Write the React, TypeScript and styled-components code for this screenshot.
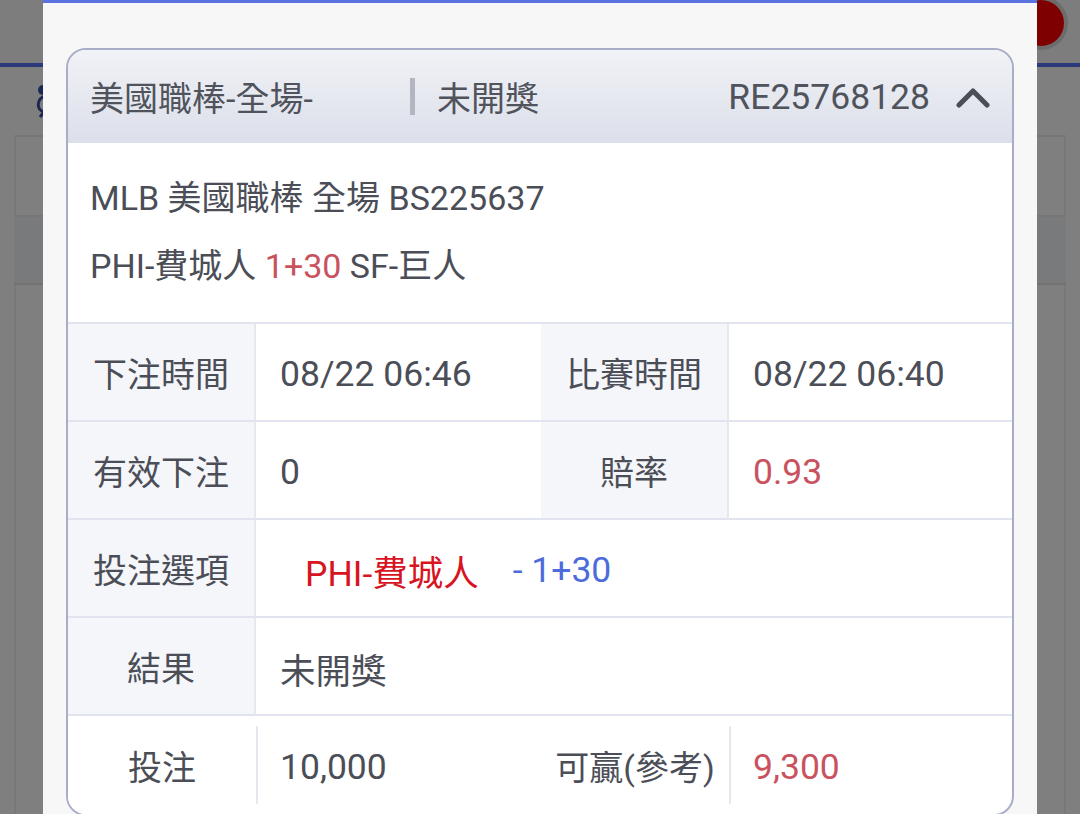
import React from "react";
import styled, { createGlobalStyle } from "styled-components";

const Global = createGlobalStyle`
  html, body { margin: 0; padding: 0; }
  body {
    width: 1080px; height: 814px; overflow: hidden;
    font-family: Roboto, "Noto Sans CJK TC", "Noto Sans", sans-serif;
    background: #ffffff;
  }
`;

const Page = styled.div`
  position: relative;
  width: 1080px;
  height: 814px;
  overflow: hidden;
  background: #ffffff;
`;

const TopBar = styled.div`
  height: 63px;
  border-bottom: 4px solid #5774f2;
  background: #fafafa;
  display: flex;
  justify-content: flex-end;
  align-items: flex-start;
  padding-right: 12px;
`;

const RedDot = styled.div`
  width: 46px;
  height: 46px;
  margin-top: -4px;
  border-radius: 50%;
  background: #ff0000;
  border: 4px solid #d8d8d8;
`;

const SubBar = styled.div`
  height: 68px;
  display: flex;
  align-items: center;
  padding-left: 34px;
`;

const BgBox = styled.div`
  margin: 0 14px;
  height: 78px;
  border: 2px solid #eeeeee;
  display: flex;
  align-items: center;
  padding-left: 26px;
  font-size: 30px;
  color: #222;
`;

const BgBand = styled.div`
  margin: 0 14px;
  height: 66px;
  background: #f2f4f8;
  border-bottom: 2px solid #e4e4e4;
`;

const BgList = styled.div`
  margin: 0 14px;
  height: 540px;
  border-left: 2px solid #f0f0f0;
  border-right: 2px solid #f0f0f0;
`;

const Overlay = styled.div`
  position: absolute;
  inset: 0;
  background: rgba(0, 0, 0, 0.5);
`;

const Modal = styled.div`
  position: absolute;
  left: 43px;
  top: 0;
  width: 994px;
  height: 900px;
  background: #f7f7f7;
  border-top: 3px solid #5b73e0;
  padding: 45px 23px 0;
  box-sizing: border-box;
`;

const Card = styled.div`
  border: 2px solid #a9adc8;
  border-radius: 20px;
  overflow: hidden;
  background: #ffffff;
  color: #4b4e57;
`;

const Header = styled.div`
  height: 93px;
  background: linear-gradient(#f1f2f6, #dcdfea);
  display: flex;
  align-items: center;
  padding: 0 22px 0 22px;
  font-size: 34px;
  color: #50535c;
`;

const HeaderTitle = styled.span`
  width: 320px;
`;

const Sep = styled.span`
  width: 5px;
  height: 37px;
  background: #b3b6c0;
  margin-right: 22px;
`;

const HeaderStatus = styled.span`
  flex: 1;
`;

const HeaderCode = styled.span`
  margin-right: 26px;
  font-size: 35.5px;
`;

const Info = styled.div`
  padding: 21px 22px 22px;
  font-size: 34px;
  line-height: 68px;
  border-bottom: 2px solid #e1e4ee;
`;

const Red = styled.span<{ $strong?: boolean }>`
  color: ${(p) => (p.$strong ? "#d7141f" : "#c9525f")};
`;

const Blue = styled.span`
  color: #4d6cdb;
`;

const Table = styled.div`
  display: grid;
  grid-template-columns: 188px 285px 188px 1fr;
  font-size: 34px;
`;

const Label = styled.div<{ $plain?: boolean; $last?: boolean }>`
  position: relative;
  box-sizing: border-box;
  height: 98px;
  display: flex;
  align-items: center;
  justify-content: center;
  background: ${(p) => (p.$plain ? "#ffffff" : "#f5f6fa")};
  border-bottom: ${(p) => (p.$last ? "none" : "2px solid #e1e4ee")};
  border-right: ${(p) => (p.$plain ? "none" : "2px solid #e6e8f0")};
`;

const Value = styled.div<{ $span?: boolean; $last?: boolean; $indent?: boolean }>`
  box-sizing: border-box;
  height: 98px;
  display: flex;
  align-items: center;
  padding-top: 4px;
  padding-left: ${(p) => (p.$indent ? "49px" : "24px")};
  grid-column: ${(p) => (p.$span ? "2 / 5" : "auto")};
  border-bottom: ${(p) => (p.$last ? "none" : "2px solid #e1e4ee")};
  font-size: 35.5px;
  gap: 34px;
`;

const ShortDivider = styled.span`
  position: absolute;
  right: -2px;
  top: 10px;
  bottom: 10px;
  width: 2px;
  background: #e6e8f0;
`;

const Chevron = () => (
  <svg width="34" height="24" viewBox="0 0 34 24" fill="none">
    <path d="M3 20 L17 6 L31 20" stroke="#4b4e57" strokeWidth="5" strokeLinecap="round" strokeLinejoin="round" />
  </svg>
);

const BgIcon = () => (
  <svg width="16" height="34" viewBox="0 0 16 34" fill="none">
    <circle cx="9" cy="6" r="5" fill="#3b4fa8" />
    <path d="M12 12 C2 14 2 26 10 28 M10 28 L6 33" stroke="#3b4fa8" strokeWidth="3" fill="none" />
  </svg>
);

export default function App() {
  return (
    <>
      <Global />
      <Page>
        <TopBar>
          <RedDot />
        </TopBar>
        <SubBar>
          <BgIcon />
        </SubBar>
        <BgBox>I</BgBox>
        <BgBand />
        <BgList />
        <Overlay />
        <Modal>
          <Card>
            <Header>
              <HeaderTitle>美國職棒-全場-</HeaderTitle>
              <Sep />
              <HeaderStatus>未開獎</HeaderStatus>
              <HeaderCode>RE25768128</HeaderCode>
              <Chevron />
            </Header>
            <Info>
              <div>MLB 美國職棒 全場 BS225637</div>
              <div>
                PHI-費城人 <Red>1+30</Red> SF-巨人
              </div>
            </Info>
            <Table>
              <Label>下注時間</Label>
              <Value>08/22 06:46</Value>
              <Label>比賽時間</Label>
              <Value>08/22 06:40</Value>

              <Label>有效下注</Label>
              <Value>0</Value>
              <Label>賠率</Label>
              <Value>
                <Red>0.93</Red>
              </Value>

              <Label>投注選項</Label>
              <Value $span $indent>
                <Red $strong>PHI-費城人</Red>
                <Blue>- 1+30</Blue>
              </Value>

              <Label>結果</Label>
              <Value $span>未開獎</Value>

              <Label $plain $last>
                投注
                <ShortDivider />
              </Label>
              <Value $last>10,000</Value>
              <Label $plain $last>
                可贏(參考)
                <ShortDivider />
              </Label>
              <Value $last>
                <Red>9,300</Red>
              </Value>
            </Table>
          </Card>
        </Modal>
      </Page>
    </>
  );
}
